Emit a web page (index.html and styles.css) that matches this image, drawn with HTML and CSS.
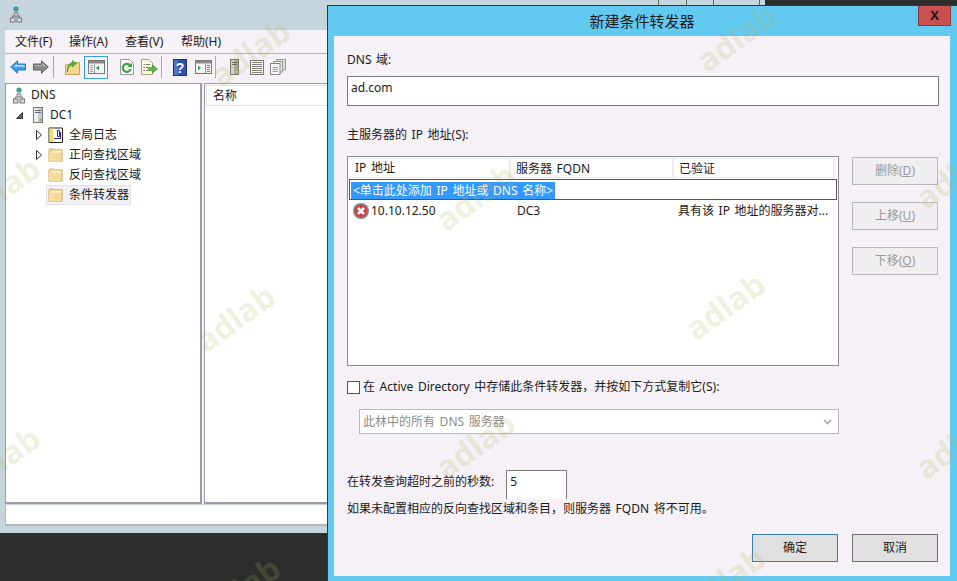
FILE: index.html
```html
<!DOCTYPE html>
<html lang="zh-CN">
<head>
  <meta charset="UTF-8">
  <title>DNS</title>
  <link rel="stylesheet" href="styles.css">
</head>
<body>

  <svg class="defs" width="0" height="0">
    <symbol id="folder" viewBox="0 0 16 14">
      <path d="M1 2.5 L1 13.5 L15 13.5 L15 1.5 L7 1.5 L6 .5 L2 .5 Z" fill="#f5dc96" stroke="#c9ab62"/>
      <path d="M2 4.5 L14 4.5 L14 2.5 L7 2.5" fill="#fdf3cf" stroke="none"/>
      <path d="M2 5 L2 12.5 L14 12.5" fill="none" stroke="#fbecbd"/>
    </symbol>
    <symbol id="dnsnode" viewBox="0 0 12 17">
      <circle cx="6" cy="3" r="2.6" fill="#3c8fc4"/>
      <path d="M4.5 1.5 L7 1 L7.5 3 L5.5 4.5 Z" fill="#4fb04c"/>
      <path d="M6 6 V9 M2.5 12 V10 H9.5 V12" fill="none" stroke="#777"/>
      <rect x="4" y="7" width="4" height="3" fill="#d8d8d8" stroke="#777" stroke-width=".8"/>
      <rect x=".5" y="12" width="4.5" height="4" fill="#d8d8d8" stroke="#777"/>
      <rect x="7" y="12" width="4.5" height="4" fill="#d8d8d8" stroke="#777"/>
    </symbol>
  </svg>

  <div class="mmc">
    <svg class="top-ticks" width="110" height="5">
      <path d="M.5 0V5M28.5 0V5M55.5 0V5M101.5 0V5" stroke="#666"/>
    </svg>
    <div class="mmc-title">
      <svg class="app-icon" width="12" height="17"><use href="#dnsnode"/></svg>
    </div>

    <div class="menubar">
      <span>文件(F)</span>
      <span>操作(A)</span>
      <span>查看(V)</span>
      <span>帮助(H)</span>
    </div>

    <div class="toolbar">
      <svg class="tool t-back" width="16" height="14" viewBox="0 0 16 14">
        <path d="M.7 7 L7.5 .8 V4 H15.5 V10 H7.5 V13.2 Z" fill="#3f9fe6" stroke="#2878c0"/>
        <path d="M3 7 L7 3.8 V5 H14.5 V6.8 H3.5 Z" fill="#a8dcfa"/>
      </svg>
      <svg class="tool t-fwd" width="16" height="14" viewBox="0 0 16 14">
        <path d="M15.3 7 L8.5 .8 V4 H.5 V10 H8.5 V13.2 Z" fill="#8a8a88" stroke="#5c5c5a"/>
        <path d="M1.5 5 H9.5 V3 L13 6 H1.5 Z" fill="#b4b4b2"/>
      </svg>
      <i class="sep sep-a"></i>
      <svg class="tool t-up" width="15" height="15" viewBox="0 0 15 15">
        <path d="M.5 5 V14.5 H14.5 V2.5 H9 L8 4 L.5 5 Z" fill="#f3d88e" stroke="#c4a45c"/>
        <path d="M2.5 12 C3 7 5 5.5 7.5 5 V7 L11.5 3.5 L7.5 .5 V2.5 C4 3 2 7 2.5 12 Z" fill="#58b030" stroke="#3a8a20" stroke-width=".6"/>
      </svg>
      <span class="t-tree">
        <svg width="17" height="14" viewBox="0 0 17 14">
          <rect x=".5" y=".5" width="16" height="13" fill="#f4f4f4" stroke="#777"/>
          <rect x="1" y="1" width="15" height="2.5" fill="#8b8b8b"/>
          <path d="M2 5.5H5M2 7.5H5M2 9.5H5M2 11.5H5" stroke="#8aa"/>
          <path d="M6.5 4V13" stroke="#999"/>
          <path d="M11 5.5 V10.5 L8 8 Z" fill="#2ca050"/>
        </svg>
      </span>
      <svg class="tool t-refresh" width="14" height="16" viewBox="0 0 14 16">
        <path d="M.5 .5 H9.5 L13.5 4.5 V15.5 H.5 Z" fill="#fbfbfb" stroke="#999"/>
        <path d="M10 6.5 A4 4 0 1 0 10.6 10" fill="none" stroke="#3aa040" stroke-width="2.2"/>
        <path d="M7.5 8 H12 V3.8 Z" fill="#3aa040"/>
      </svg>
      <svg class="tool t-export" width="17" height="16" viewBox="0 0 17 16">
        <path d="M.5 .5 H8 L11.5 4 V15.5 H.5 Z" fill="#fdf8e6" stroke="#a8a080"/>
        <path d="M2.5 5.5H4M5 5.5H9M2.5 8.5H4M5 8.5H7M2.5 11.5H4M5 11.5H7" stroke="#776"/>
        <path d="M7.5 8.5 H11.5 V6 L16.5 10 L11.5 14 V11.5 H7.5 Z" fill="#62b840" stroke="#408a28" stroke-width=".6"/>
      </svg>
      <i class="sep sep-b"></i>
      <svg class="tool t-help" width="14" height="17" viewBox="0 0 14 17">
        <rect x=".5" y=".5" width="13" height="16" fill="#2f50b0" stroke="#1c2f78"/>
        <rect x="1" y="1" width="4" height="15" fill="#5574cc"/>
        <text class="help-q" x="7" y="13.5" text-anchor="middle">?</text>
      </svg>
      <svg class="tool t-pane" width="17" height="14" viewBox="0 0 17 14">
        <rect x=".5" y=".5" width="16" height="13" fill="#f4f4f4" stroke="#777"/>
        <rect x="1" y="1" width="15" height="2.5" fill="#8b8b8b"/>
        <path d="M3 5.5 V10.5 L6 8 Z" fill="#2ca050"/>
        <path d="M10.5 4V13" stroke="#999"/>
        <path d="M12 5.5H15M12 7.5H15M12 9.5H15M12 11.5H15" stroke="#58a"/>
      </svg>
      <i class="sep sep-c"></i>
      <svg class="tool t-server" width="9" height="16" viewBox="0 0 9 16">
        <rect x=".5" y=".5" width="8" height="15" fill="#a8a69a" stroke="#77766c"/>
        <rect x="1" y="1" width="3" height="14" fill="#d8d6cc"/>
        <path d="M2 3.5H7M2 5.5H7" stroke="#66655c"/>
        <rect x="6" y="12" width="1.5" height="1.5" fill="#eee"/>
      </svg>
      <svg class="tool t-list" width="14" height="15" viewBox="0 0 14 15">
        <rect x=".5" y=".5" width="13" height="14" fill="#f6f6f0" stroke="#77766c"/>
        <path d="M2 2.5H12M2 4.5H12M2 6.5H12M2 8.5H12M2 10.5H12M2 12.5H12" stroke="#85847a"/>
      </svg>
      <svg class="tool t-copy" width="16" height="16" viewBox="0 0 16 16">
        <path d="M6.5 3 V.5 H15.5 V11 H12" fill="#dcdcdc" stroke="#999"/>
        <path d="M3.5 4 V2.5 H12.5 V13 H10" fill="#e8e8e8" stroke="#999"/>
        <rect x=".5" y="4.5" width="9.5" height="11" fill="#f6f6f6" stroke="#888"/>
        <path d="M2.5 8.5H8M2.5 10.5H8M2.5 12.5H8" stroke="#999"/>
      </svg>
    </div>

    <div class="panes">
      <div class="tree">
        <div class="node">
          <svg class="node-icon dns-icon" width="12" height="17"><use href="#dnsnode"/></svg>
          <span>DNS</span>
        </div>
        <div class="node lvl-1">
          <svg class="twisty" width="7" height="7" viewBox="0 0 7 7"><path d="M6.5 .5 V6.5 H.5 Z" fill="#666" stroke="#333"/></svg>
          <svg class="node-icon dc-icon" width="10" height="16" viewBox="0 0 10 16">
            <rect x=".5" y=".5" width="9" height="15" fill="#c8ccd0" stroke="#777"/>
            <rect x="1" y="1" width="4" height="14" fill="#eef0f2"/>
            <path d="M2 3.5H8M2 5.5H8" stroke="#667"/>
            <rect x="6.5" y="12" width="2" height="2" fill="#50c040"/>
          </svg>
          <span>DC1</span>
        </div>
        <div class="node lvl-2">
          <svg class="twisty" width="6" height="10" viewBox="0 0 6 10"><path d="M.5 .5 V9.5 L5.5 5 Z" fill="#fff" stroke="#333"/></svg>
          <svg class="node-icon" width="15" height="16" viewBox="0 0 15 16">
            <path d="M1 1 H14.5 V15.5 H1 Z" fill="#fff" stroke="#222"/>
            <rect x="1.5" y="1.5" width="4" height="13.5" fill="#f2dc70"/>
            <path d="M6 11.5 H13 M12.5 5 V11 M9.5 3.5 H11.5 V9.5 H9.5 Z" fill="none" stroke="#2a2aa0"/>
          </svg>
          <span>全局日志</span>
        </div>
        <div class="node lvl-2">
          <svg class="twisty" width="6" height="10" viewBox="0 0 6 10"><path d="M.5 .5 V9.5 L5.5 5 Z" fill="#fff" stroke="#333"/></svg>
          <svg class="node-icon" width="15" height="14"><use href="#folder"/></svg>
          <span>正向查找区域</span>
        </div>
        <div class="node lvl-2 no-twisty">
          <svg class="node-icon" width="15" height="14"><use href="#folder"/></svg>
          <span>反向查找区域</span>
        </div>
        <div class="node lvl-2 no-twisty">
          <div class="node-sel">
            <svg class="node-icon" width="15" height="14"><use href="#folder"/></svg>
            <span>条件转发器</span>
          </div>
        </div>
      </div>
      <div class="results">
        <div class="results-head">名称</div>
      </div>
    </div>
    <div class="statusbar"></div>
  </div>

  <div class="dialog">
    <div class="dlg-title">
      <span>新建条件转发器</span>
      <span class="dlg-close">X</span>
    </div>
    <div class="dlg-body">
      <label class="lbl lbl-domain">DNS 域:</label>
      <div class="textbox">ad.com</div>
      <label class="lbl lbl-ip">主服务器的 IP 地址(S):</label>

      <div class="ip-area">
        <div class="ip-table">
          <div class="ip-head">
            <span class="col-ip">IP 地址</span>
            <span class="col-fqdn">服务器 FQDN</span>
            <span class="col-ok">已验证</span>
          </div>
          <div class="ip-add"><span>&lt;单击此处添加 IP 地址或 DNS 名称&gt;</span></div>
          <div class="ip-row">
            <span class="col-ip">
              <svg class="err-icon" width="16" height="16" viewBox="0 0 16 16">
                <circle cx="8" cy="8" r="8" fill="#85858c"/>
                <circle cx="8" cy="8" r="6.2" fill="#d63a3a"/>
                <path d="M5 5 L11 11 M11 5 L5 11" stroke="#fff" stroke-width="2.6"/>
              </svg>
              10.10.12.50
            </span>
            <span class="col-fqdn">DC3</span>
            <span class="col-ok">具有该 IP 地址的服务器对...</span>
          </div>
        </div>
        <div class="side-btns">
          <button class="btn" disabled>删除(<u>D</u>)</button>
          <button class="btn" disabled>上移(<u>U</u>)</button>
          <button class="btn" disabled>下移(<u>O</u>)</button>
        </div>
      </div>

      <div class="store-row">
        <span class="checkbox"></span>
        <span>在 Active Directory 中存储此条件转发器，并按如下方式复制它(S):</span>
      </div>
      <div class="combo">
        <span>此林中的所有 DNS 服务器</span>
        <svg width="9" height="6" viewBox="0 0 9 6"><path d="M1 1 L4.5 4.5 L8 1" fill="none" stroke="#aaa" stroke-width="1.6"/></svg>
      </div>

      <div class="timeout-row">
        <span>在转发查询超时之前的秒数:</span>
        <div class="timeout-box">5</div>
      </div>
      <p class="hint">如果未配置相应的反向查找区域和条目，则服务器 FQDN 将不可用。</p>

      <div class="dlg-actions">
        <button class="btn btn-on btn-default">确定</button>
        <button class="btn btn-on">取消</button>
      </div>
    </div>
  </div>

  <!-- watermark over the whole shot -->
  <span class="wm wm-1">adlab</span>
  <span class="wm wm-2">adlab</span>
  <span class="wm wm-3">adlab</span>
  <span class="wm wm-4">adlab</span>
  <span class="wm wm-5">adlab</span>
  <span class="wm wm-6">adlab</span>
  <span class="wm wm-7">adlab</span>
  <span class="wm wm-8">adlab</span>
  <span class="wm wm-9">adlab</span>
  <span class="wm wm-10">adlab</span>
  <span class="wm wm-11">adlab</span>
  <span class="wm wm-12">adlab</span>

</body>
</html>
```

FILE: styles.css
```css
* {
  box-sizing: border-box;
}

body {
  margin: 0;
  width: 957px;
  height: 581px;
  overflow: hidden;
  position: relative;
  background-color: #2c2e2b;
  color: #1a1a1a;
  font-family: "Noto Sans", "Noto Sans CJK SC", sans-serif;
  font-size: 12px;
  line-height: 20px;
}

.defs {
  position: absolute;
}

/* main console window */
.mmc {
  position: absolute;
  left: 0;
  top: 0;
  width: 765px;
  height: 533px;
  background-color: #c4d5dc;
  padding: 0 0 7px 5px;
  display: flex;
  flex-direction: column;
}

.top-ticks {
  position: absolute;
  left: 658px;
  top: 0;
}

.mmc-title {
  height: 30px;
  padding: 6px 0 0 5px;
  flex: none;
}

.app-icon {
  display: block;
}

.menubar {
  height: 24px;
  flex: none;
  display: flex;
  align-items: center;
  gap: 16px;
  padding-left: 10px;
  background-color: #f5f1f6;
  border-bottom: 1px solid #b4b4ba;
}

.menubar span {
  width: 40px;
  white-space: nowrap;
}

.menubar span:first-child {
  width: 38px;
}

.toolbar {
  height: 29px;
  flex: none;
  display: flex;
  align-items: center;
  padding-bottom: 3px;
  background-color: #f5f1f6;
}

.tool {
  display: block;
  flex: none;
}

.t-back { margin-left: 5px; }
.t-fwd { margin-left: 7px; }
.t-up { margin-left: 11px; }
.t-refresh { margin-left: 12px; }
.t-export { margin-left: 7px; }
.t-help { margin-left: 11px; }
.t-pane { margin-left: 8px; }
.t-server { margin-left: 14px; }
.t-list { margin-left: 11px; }
.t-copy { margin-left: 6px; }

.help-q {
  fill: #fff;
  font-family: "Liberation Sans", sans-serif;
  font-size: 14px;
  font-weight: bold;
}

.sep {
  width: 1px;
  height: 22px;
  flex: none;
  background-color: #a8a8ae;
}

.sep-a { margin-left: 4px; }
.sep-b { margin-left: 3px; }
.sep-c { margin-left: 3px; }

.t-tree {
  width: 24px;
  height: 23px;
  flex: none;
  margin-left: 4px;
  display: flex;
  align-items: center;
  justify-content: center;
  background-color: #f0f3f8;
  border: 1px solid #3aa0e0;
}

.panes {
  flex: 1;
  display: flex;
  gap: 2px;
  background-color: #f5f1f6;
  min-height: 0;
}

.tree {
  width: 197px;
  flex: none;
  background-color: #fff;
  border: 1px solid #9b9bab;
  border-right-width: 2px;
  border-bottom-width: 2px;
  padding-top: 1px;
}

.node {
  height: 20px;
  display: flex;
  align-items: center;
  padding-left: 7px;
}

.node-icon {
  flex: none;
  display: block;
}

.dns-icon {
  margin-right: 6px;
}

.lvl-1 {
  padding-left: 10px;
}

.lvl-1 .twisty {
  margin-right: 10px;
}

.dc-icon {
  margin-right: 7px;
}

.lvl-2 {
  padding-left: 30px;
}

.lvl-2 .twisty {
  margin-right: 6px;
}

.lvl-2 .node-icon {
  margin-right: 6px;
}

.no-twisty {
  padding-left: 42px;
}

.node-sel {
  height: 20px;
  margin-left: -2px;
  padding: 0 1px 0 1px;
  display: flex;
  align-items: center;
  background-color: #f2f0f2;
  border: 1px solid #e2e0e2;
}

.results {
  flex: 1;
  background-color: #fff;
  border: 1px solid #9b9bab;
  border-bottom-width: 2px;
  padding: 1px;
}

.results-head {
  height: 21px;
  padding-left: 6px;
  border: 1px solid #e2e2e2;
  line-height: 19px;
}

.statusbar {
  height: 21px;
  flex: none;
  margin-top: 1px;
  background-color: #fff;
  border: 1px solid #b4b4ba;
  border-top: none;
  border-bottom-width: 2px;
}

/* dialog */
.dialog {
  position: absolute;
  left: 327px;
  top: 5px;
  width: 630px;
  height: 576px;
  background-color: #62c9f0;
  border: 1px solid #2f3a40;
  border-right: none;
  border-bottom: none;
  padding: 0 7px 5px 6px;
  display: flex;
  flex-direction: column;
}

.dlg-title {
  height: 30px;
  flex: none;
  font-size: 15px;
  display: flex;
  align-items: center;
  justify-content: center;
  position: relative;
}

.dlg-close {
  position: absolute;
  right: -1px;
  top: 0;
  width: 33px;
  height: 20px;
  background-color: #c75050;
  border: 1px solid #8c3a3a;
  border-top: none;
  color: #111;
  font-family: "Liberation Sans", sans-serif;
  font-size: 13px;
  font-weight: bold;
  line-height: 19px;
  text-align: center;
}

.dlg-body {
  flex: 1;
  background-color: #f5f1f6;
  padding: 14px 12px 0 13px;
  display: flex;
  flex-direction: column;
  min-height: 0;
  word-spacing: 1.5px;
}

.lbl {
  display: block;
}

.textbox {
  height: 30px;
  width: 592px;
  margin-top: 6px;
  background-color: #fff;
  border: 1px solid #7a7a80;
  padding: 1px 3px;
  line-height: 20px;
}

.lbl-ip {
  margin-top: 19px;
}

.ip-area {
  display: flex;
  margin-top: 11px;
  height: 210px;
}

.ip-table {
  width: 492px;
  flex: none;
  background-color: #fff;
  border: 1px solid #8a8a92;
  padding: 1px;
}

.ip-head,
.ip-row {
  display: flex;
}

.ip-head {
  height: 20px;
  width: 486px;
  border-top: 1px solid #ececec;
  border-bottom: 1px solid #ececec;
  line-height: 20px;
}

.ip-head span {
  border-right: 2px solid #ececec;
}

.col-ip {
  width: 162px;
  padding-left: 6px;
  flex: none;
  display: flex;
  align-items: center;
}

.col-fqdn {
  width: 163px;
  padding-left: 5px;
  flex: none;
}

.col-ok {
  padding-left: 5px;
  flex: 1;
  white-space: nowrap;
}

.ip-row .col-ip {
  padding-left: 4px;
}

.ip-row .col-fqdn {
  padding-left: 6px;
}

.ip-row .col-ok {
  padding-left: 4px;
}

.ip-add {
  height: 21px;
  margin-top: 1px;
  border: 1px solid #555;
  padding: 1px;
}

.ip-add span {
  display: inline-block;
  height: 17px;
  padding: 0 2px;
  line-height: 17px;
  background-color: #3399ff;
  color: #fff;
}

.ip-row {
  height: 21px;
  margin-top: 0;
  align-items: center;
}

.err-icon {
  margin-right: 2px;
  flex: none;
}

.side-btns {
  margin-left: 13px;
  display: flex;
  flex-direction: column;
  gap: 17px;
  margin-top: 1px;
}

.btn {
  width: 86px;
  height: 28px;
  padding: 0;
  background-color: #f0eef0;
  border: 1px solid #b8b8bc;
  color: #9a9a9a;
  font: inherit;
}

.btn-on {
  background-color: #e0e0e0;
  border-color: #707070;
  color: #1a1a1a;
}

.btn-default {
  border-color: #3c7fb1;
}

.store-row {
  display: flex;
  align-items: center;
  gap: 3px;
  margin-top: 11px;
  height: 20px;
}

.checkbox {
  width: 13px;
  height: 13px;
  flex: none;
  background-color: #fff;
  border: 1px solid #555;
}

.combo {
  width: 480px;
  height: 25px;
  margin: 12px 0 0 12px;
  background-color: #fff;
  border: 1px solid #b8b8bc;
  color: #8a8a8a;
  padding: 0 6px 0 3px;
  display: flex;
  align-items: center;
  justify-content: space-between;
}

.timeout-row {
  display: flex;
  align-items: flex-start;
  margin-top: 36px;
  height: 29px;
  gap: 12px;
}

.timeout-row span {
  margin-top: 2px;
}

.timeout-box {
  width: 61px;
  height: 30px;
  background-color: #fff;
  border: 1px solid #7a7a80;
  padding: 0 3px;
  line-height: 21px;
}

.hint {
  margin: 0;
  height: 20px;
  background-color: #f5f1f6;
  position: relative;
}

.dlg-actions {
  display: flex;
  justify-content: flex-end;
  gap: 14px;
  margin-top: 15px;
}

/* adlab watermark */
.wm {
  position: absolute;
  width: 100px;
  margin: -20px 0 0 -50px;
  text-align: center;
  font-family: "Open Sans", sans-serif;
  font-size: 32px;
  font-weight: bold;
  line-height: 40px;
  color: rgba(175, 175, 90, 0.2);
  transform: rotate(-36deg);
  pointer-events: none;
}

.wm-1 { left: 250px; top: 53px; }
.wm-2 { left: 736px; top: 38px; }
.wm-3 { left: 475px; top: 197px; }
.wm-4 { left: 235px; top: 318px; }
.wm-5 { left: 725px; top: 306px; }
.wm-6 { left: 475px; top: 445px; }
.wm-7 { left: 0; top: 190px; }
.wm-8 { left: 0; top: 460px; }
.wm-9 { left: 240px; top: 590px; }
.wm-10 { left: 725px; top: 580px; }
.wm-11 { left: 955px; top: 175px; }
.wm-12 { left: 955px; top: 445px; }
```
